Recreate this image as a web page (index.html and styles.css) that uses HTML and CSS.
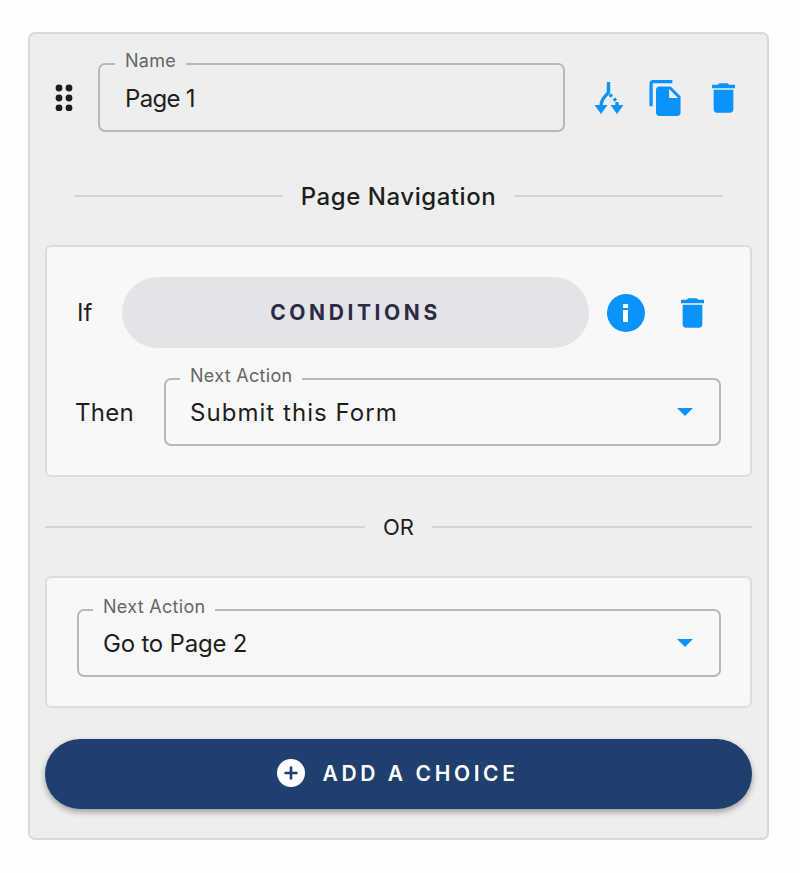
FILE: index.html
```html
<!DOCTYPE html>
<html lang="en">
<head>
    <meta charset="UTF-8">
    <meta name="viewport" content="width=device-width, initial-scale=1.0">
    <title>Page 1</title>
    <link rel="stylesheet" href="styles.css">
</head>
<body>
    <div class="panel">
        <div class="page-header">
            <svg class="drag-handle" viewBox="0 0 18 27" aria-hidden="true">
                <circle cx="4" cy="4" r="3.4"/><circle cx="14" cy="4" r="3.4"/>
                <circle cx="4" cy="14" r="3.4"/><circle cx="14" cy="14" r="3.4"/>
                <circle cx="4" cy="24" r="3.4"/><circle cx="14" cy="24" r="3.4"/>
            </svg>
            <div class="field name-field">
                <span class="field-label">Name</span>
                <span class="field-value name-value">Page 1</span>
            </div>
            <div class="header-actions">
                <svg class="icon-branch" viewBox="0 0 30 34" aria-hidden="true">
                    <path class="branch-line" d="M14.500 1v9.500c0 3.500-7.500 5-7.500 15"/>
                    <path class="branch-line" d="M15.500 13.500l2.500 2M20 17.500l1.800 2.300"/>
                    <path class="branch-line" d="M23 21v5"/>
                    <path d="M.5 24h13L7 33z"/>
                    <path d="M16.500 24h13L23 33z"/>
                </svg>
                <svg class="icon-copy" viewBox="2 1 19 22" aria-hidden="true">
                    <path d="M16 1H4c-1.100 0-2 .9-2 2v14h2V3h12V1zm-1 4l6 6v10c0 1.100-.9 2-2 2H7.990C6.890 23 6 22.100 6 21l.01-14c0-1.100.89-2 1.990-2h7zm-1 7h5.500L14 6.500V12z"/>
                </svg>
                <svg class="icon-trash" viewBox="5 3 14 18" aria-hidden="true">
                    <path d="M6 19c0 1.100.9 2 2 2h8c1.100 0 2-.9 2-2V7H6v12zM19 4h-3.500l-1-1h-5l-1 1H5v2h14V4z"/>
                </svg>
            </div>
        </div>

        <div class="divider nav-divider">
            <span class="divider-text">Page Navigation</span>
        </div>

        <div class="card">
            <div class="rule-row if-row">
                <span class="rule-word if-word">If</span>
                <button type="button" class="conditions-btn">CONDITIONS</button>
                <div class="info-badge">
                    <svg viewBox="0 0 8 18" aria-hidden="true">
                        <rect x="1" y="0" width="5" height="4" rx="0.500"/>
                        <rect x="1" y="6" width="5" height="12"/>
                    </svg>
                </div>
                <svg class="icon-trash" viewBox="5 3 14 18" aria-hidden="true">
                    <path d="M6 19c0 1.100.9 2 2 2h8c1.100 0 2-.9 2-2V7H6v12zM19 4h-3.500l-1-1h-5l-1 1H5v2h14V4z"/>
                </svg>
            </div>
            <div class="rule-row then-row">
                <span class="rule-word then-word">Then</span>
                <div class="field select-field">
                    <span class="field-label">Next Action</span>
                    <span class="field-value submit-value">Submit this Form</span>
                    <span class="select-arrow"></span>
                </div>
            </div>
        </div>

        <div class="divider or-divider">
            <span class="divider-text">OR</span>
        </div>

        <div class="card default-card">
            <div class="field select-field">
                <span class="field-label">Next Action</span>
                <span class="field-value page-value">Go to Page 2</span>
                <span class="select-arrow"></span>
            </div>
        </div>

        <button type="button" class="add-btn">
            <svg class="add-icon" viewBox="0 0 28 28" aria-hidden="true">
                <circle cx="14" cy="14" r="14" fill="#fff"/>
                <path d="M14 7.500v13M7.500 14h13" stroke="#1f3f6e" stroke-width="2.600"/>
            </svg>
            ADD A CHOICE
        </button>
    </div>
</body>
</html>
```

FILE: styles.css
```css
body {
    font-family: Inter, "Liberation Sans", sans-serif;
    background-color: #fdfdfd;
    color: #1e1e1e;
    margin: 0;
    padding: 32px 31px 33px 28px;
}

.panel {
    height: 808px;
    box-sizing: border-box;
    padding: 29px 15px 0;
    background-color: #eeeeee;
    border: 2px solid #d9d9d9;
    border-radius: 7px;
}

.page-header {
    display: flex;
    align-items: center;
    height: 69px;
    padding-left: 10px;
}

.drag-handle {
    width: 18px;
    height: 27px;
    margin-right: 25px;
    fill: #1e1e1e;
}

.field {
    position: relative;
    box-sizing: border-box;
    height: 68px;
    display: flex;
    align-items: center;
    padding: 0 24px;
    background-color: inherit;
    border: 2px solid #b8b8b8;
    border-radius: 7px;
}

.field-label {
    position: absolute;
    top: -14px;
    left: 14px;
    padding: 0 10px;
    background-color: inherit;
    color: #666;
    font-size: 18px;
    letter-spacing: 0.3px;
    line-height: 20px;
}

.field-value {
    font-size: 24px;
}

.name-value {
    letter-spacing: -0.7px;
}

.submit-value {
    letter-spacing: 1.05px;
}

.page-value {
    letter-spacing: -0.2px;
}

.name-field {
    width: 467px;
    height: 69px;
    padding: 2px 24px 0 25px;
    background-color: #eeeeee;
}

.name-field .field-label {
    left: 15px;
}

.header-actions {
    display: flex;
    align-items: center;
    margin-left: 29px;
    fill: #0a93fb;
}

.icon-branch {
    width: 30px;
    height: 34px;
    margin-right: 25px;
}

.branch-line {
    fill: none;
    stroke: #0a93fb;
    stroke-width: 3.4;
}

.icon-copy {
    width: 32px;
    height: 36px;
    margin-right: 31px;
}

.icon-trash {
    width: 23px;
    height: 30px;
    fill: #0a93fb;
}

.divider {
    display: flex;
    align-items: center;
}

.divider::before,
.divider::after {
    content: "";
    flex: 1;
    height: 2px;
    background-color: #d4d4d4;
}

.nav-divider {
    height: 40px;
    margin: 44px 29px 29px 29px;
}

.nav-divider .divider-text {
    padding: 0 18px;
    font-size: 24px;
    font-weight: 500;
    letter-spacing: 0.55px;
}

.card {
    box-sizing: border-box;
    height: 232px;
    padding: 30px 29px 0 30px;
    background-color: #f8f8f8;
    border: 2px solid #dcdcdc;
    border-radius: 6px;
}

.rule-row {
    display: flex;
    align-items: center;
}

.rule-word {
    font-size: 24px;
}

.if-word {
    width: 45px;
}

.conditions-btn {
    width: 467px;
    height: 71px;
    border: none;
    border-radius: 36px;
    background-color: #e4e4e8;
    color: #2b2b45;
    font-family: inherit;
    font-size: 21px;
    font-weight: 700;
    letter-spacing: 3.6px;
}

.info-badge {
    display: flex;
    align-items: center;
    justify-content: center;
    width: 38px;
    height: 38px;
    margin: 0 36px 0 18px;
    border-radius: 50%;
    background-color: #0a93fb;
}

.info-badge svg {
    width: 8px;
    height: 18px;
    fill: #fff;
}

.then-row {
    margin-top: 30px;
}

.then-word {
    width: 89px;
    margin-left: -2px;
    letter-spacing: 0.3px;
}

.select-field {
    flex: 1;
    background-color: #f8f8f8;
}

.select-arrow {
    position: absolute;
    right: 26px;
    top: 28px;
    border-left: 8px solid transparent;
    border-right: 8px solid transparent;
    border-top: 8px solid #0a93fb;
}

.or-divider {
    height: 30px;
    margin: 35px 0 34px;
}

.or-divider .divider-text {
    padding: 0 18px;
    font-size: 22px;
}

.default-card {
    height: 132px;
    padding-top: 31px;
}

.add-btn {
    display: flex;
    align-items: center;
    justify-content: center;
    width: 100%;
    height: 70px;
    margin-top: 31px;
    padding: 0 2px 2px 0;
    border: none;
    border-radius: 35px;
    background-color: #1f3f6e;
    box-shadow: 0 3px 6px rgba(0, 0, 0, 0.35);
    color: #fff;
    font-family: inherit;
    font-size: 21px;
    font-weight: 600;
    letter-spacing: 3.6px;
}

.add-icon {
    width: 28px;
    height: 28px;
    margin-right: 18px;
}
```
